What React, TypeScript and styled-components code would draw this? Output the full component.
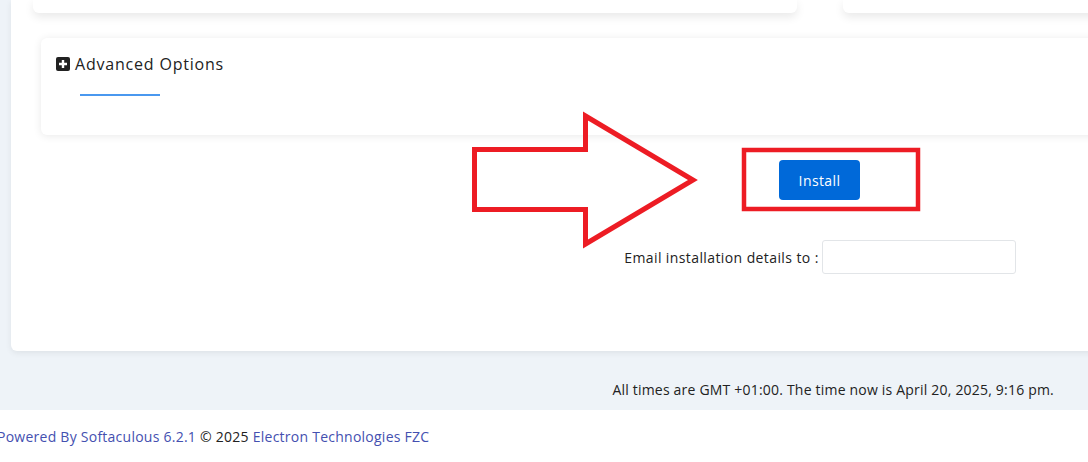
import React from 'react';
import styled, { createGlobalStyle } from 'styled-components';

const GlobalStyle = createGlobalStyle`
  * {
    box-sizing: border-box;
  }
  body {
    margin: 0;
    background: #eef3f8;
    font-family: "Open Sans", "Liberation Sans", sans-serif;
    color: #212529;
    overflow: hidden;
  }
`;

const Page = styled.div`
  position: relative;
  width: 1088px;
  height: 462px;
  overflow: hidden;
`;

const Panel = styled.div`
  margin-left: 11px;
  width: 1618px;
  height: 351px;
  background: #fff;
  border-radius: 0 0 6px 6px;
  box-shadow: 0 2px 6px rgba(0, 0, 0, 0.07);
  padding: 0 22px;
  display: flex;
  flex-direction: column;
`;

const TopRow = styled.div`
  display: grid;
  grid-template-columns: 1fr 1fr;
  gap: 46px;
`;

const StubCard = styled.div`
  height: 13px;
  background: #fff;
  border-radius: 0 0 6px 6px;
  box-shadow: 0 4px 10px rgba(0, 0, 0, 0.09);
`;

const OptionsCard = styled.div`
  margin: 25px 8px 0;
  height: 97px;
  background: #fff;
  border-radius: 6px;
  box-shadow: 0 1px 8px rgba(0, 0, 0, 0.09);
  padding: 15px 15px 0;
`;

const OptionsHeader = styled.div`
  display: flex;
  align-items: center;
  gap: 5px;
  font-size: 16px;
  line-height: 22px;
  color: #222;
  letter-spacing: 0.8px;
`;

const Underline = styled.div`
  width: 80px;
  height: 2px;
  margin: 19px 0 0 24px;
  background: #4a98ef;
`;

const Actions = styled.div`
  display: flex;
  flex-direction: column;
  align-items: center;
  padding-top: 25px;
`;

const InstallButton = styled.button`
  width: 81px;
  height: 40px;
  margin-left: -1px;
  border: none;
  border-radius: 4px;
  background: #0069d9;
  color: #fff;
  font-family: inherit;
  font-size: 14px;
  font-weight: 500;
  letter-spacing: 0.4px;
  cursor: pointer;
`;

const EmailRow = styled.div`
  margin-top: 40px;
  display: flex;
  align-items: center;
  gap: 3px;
  font-size: 14px;
  letter-spacing: 0.4px;
  color: #222;
`;

const EmailInput = styled.input`
  width: 194px;
  height: 34px;
  border: 1px solid #e2e5e8;
  border-radius: 3px;
  outline: none;
`;

const TimeBar = styled.div`
  height: 59px;
  display: flex;
  align-items: center;
  justify-content: flex-end;
  padding: 18px 34px 0 0;
  font-size: 14px;
  letter-spacing: 0.2px;
  color: #222;
`;

const Credits = styled.div`
  background: #fff;
  height: 52px;
  display: flex;
  align-items: center;
  margin-left: -3px;
  font-size: 14px;
  letter-spacing: 0.25px;
  color: #222;
`;

const CreditLink = styled.a`
  color: #4450b0;
  text-decoration: none;
`;

const Overlay = styled.svg`
  position: absolute;
  left: 0;
  top: 0;
  pointer-events: none;
`;

const PlusSquare = () => (
  <svg width="14" height="14" viewBox="0 0 14 14">
    <rect x="0" y="0" width="14" height="14" rx="2" fill="#222" />
    <path d="M7 3v8M3 7h8" stroke="#fff" strokeWidth="2.4" />
  </svg>
);

export default function App() {
  return (
    <Page>
      <GlobalStyle />
      <Panel>
        <TopRow>
          <StubCard />
          <StubCard />
        </TopRow>
        <OptionsCard>
          <OptionsHeader>
            <PlusSquare />
            <span>Advanced Options</span>
          </OptionsHeader>
          <Underline />
        </OptionsCard>
        <Actions>
          <InstallButton>Install</InstallButton>
          <EmailRow>
            <label>Email installation details to :</label>
            <EmailInput type="text" />
          </EmailRow>
        </Actions>
      </Panel>
      <TimeBar>All times are GMT +01:00. The time now is April 20, 2025, 9:16 pm.</TimeBar>
      <Credits>
        <CreditLink href="#">Powered By Softaculous 6.2.1</CreditLink>
        &nbsp;© 2025&nbsp;
        <CreditLink href="#">Electron Technologies FZC</CreditLink>
      </Credits>
      <Overlay width="1088" height="462">
        <polygon
          points="474.5,149.5 585.5,149.5 585.5,116 693,180 585.5,244 585.5,209.5 474.5,209.5"
          fill="none"
          stroke="#ed1c24"
          strokeWidth="5"
          strokeLinejoin="miter"
        />
        <rect x="744" y="150" width="174" height="59" fill="none" stroke="#ed1c24" strokeWidth="4.5" />
      </Overlay>
    </Page>
  );
}
